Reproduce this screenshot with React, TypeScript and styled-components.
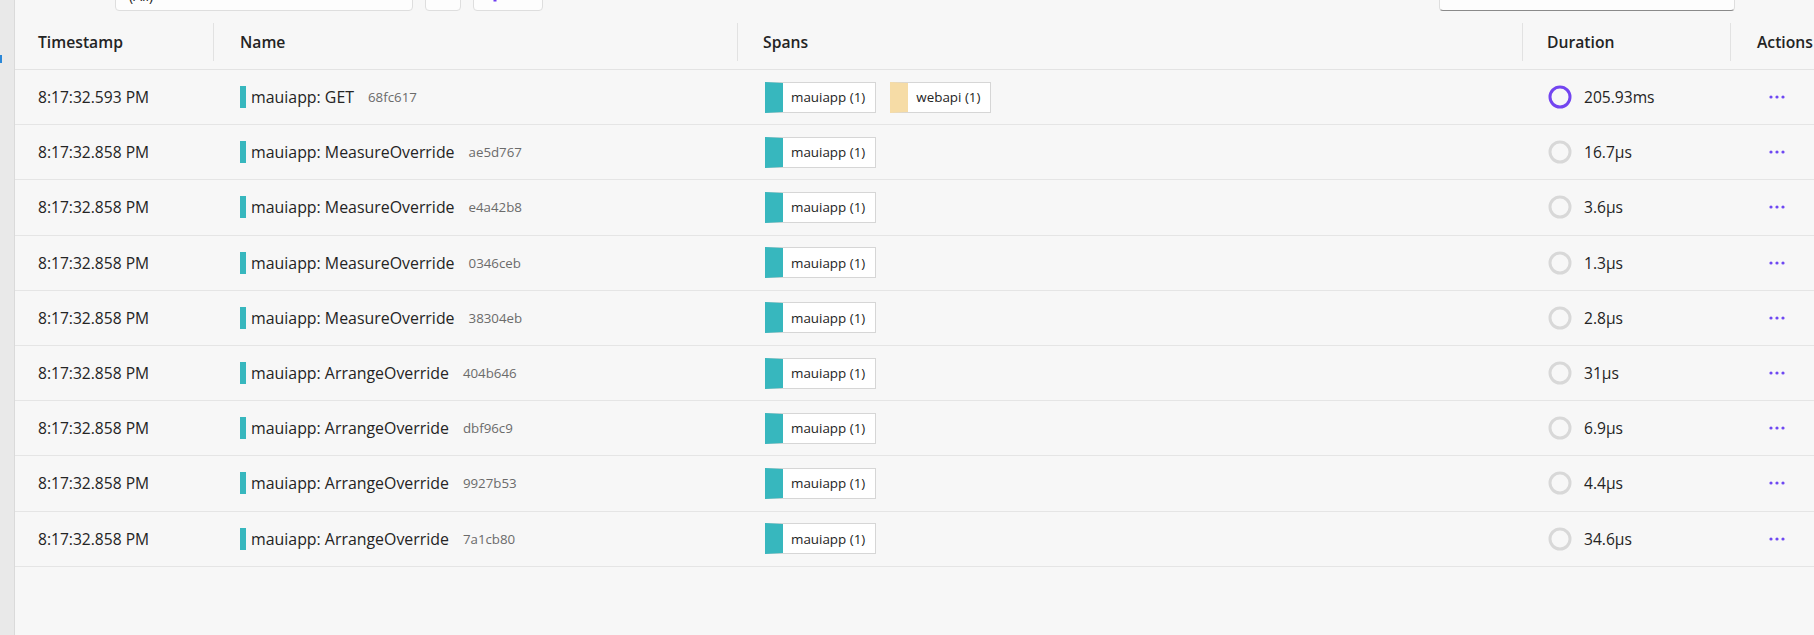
import styled, { createGlobalStyle } from "styled-components";

const GlobalStyle = createGlobalStyle`
    html, body {
        margin: 0;
        padding: 0;
        background: #f7f7f7;
        font-family: "Open Sans", "Noto Sans", sans-serif;
        color: #242424;
    }
`;

interface Span {
    label: string;
    color: string;
}

interface Trace {
    time: string;
    name: string;
    id: string;
    spans: Span[];
    duration: string;
    active?: boolean;
}

const TEAL = "#37b7be";
const AMBER = "#f6dca6";

const mauiapp: Span = { label: "mauiapp (1)", color: TEAL };

const traces: Trace[] = [
    { time: "8:17:32.593 PM", name: "mauiapp: GET", id: "68fc617", spans: [mauiapp, { label: "webapi (1)", color: AMBER }], duration: "205.93ms", active: true },
    { time: "8:17:32.858 PM", name: "mauiapp: MeasureOverride", id: "ae5d767", spans: [mauiapp], duration: "16.7µs" },
    { time: "8:17:32.858 PM", name: "mauiapp: MeasureOverride", id: "e4a42b8", spans: [mauiapp], duration: "3.6µs" },
    { time: "8:17:32.858 PM", name: "mauiapp: MeasureOverride", id: "0346ceb", spans: [mauiapp], duration: "1.3µs" },
    { time: "8:17:32.858 PM", name: "mauiapp: MeasureOverride", id: "38304eb", spans: [mauiapp], duration: "2.8µs" },
    { time: "8:17:32.858 PM", name: "mauiapp: ArrangeOverride", id: "404b646", spans: [mauiapp], duration: "31µs" },
    { time: "8:17:32.858 PM", name: "mauiapp: ArrangeOverride", id: "dbf96c9", spans: [mauiapp], duration: "6.9µs" },
    { time: "8:17:32.858 PM", name: "mauiapp: ArrangeOverride", id: "9927b53", spans: [mauiapp], duration: "4.4µs" },
    { time: "8:17:32.858 PM", name: "mauiapp: ArrangeOverride", id: "7a1cb80", spans: [mauiapp], duration: "34.6µs" },
];

const COLUMNS = "198px 524px 785px 208px 1fr";

const Page = styled("div")`
    display: flex;
    min-height: 635px;
`;

const Sidebar = styled("nav")`
    width: 14px;
    flex-shrink: 0;
    background: #e9e9e9;
    border-right: 1px solid #dadada;
    padding-top: 55px;
    .marker{
        width: 2px;
        height: 8px;
        background: #2b88d8;
    }
`;

const Main = styled("main")`
    flex: 1;
    display: flex;
    flex-direction: column;
    min-width: 0;
`;

const Toolbar = styled("div")`
    height: 12px;
    display: flex;
    align-items: flex-end;
    overflow: hidden;
    padding-left: 100px;
    padding-bottom: 1px;
    box-sizing: border-box;
`;

const ToolBox = styled("div")<{ $w: number; $gap?: number; $underline?: boolean }>`
    flex-shrink: 0;
    width: ${p => p.$w}px;
    height: 32px;
    margin-left: ${p => p.$gap ?? 0}px;
    box-sizing: border-box;
    background: #fdfdfd;
    border: 1px solid #dedede;
    border-bottom-color: ${p => p.$underline ? "#8a8a8a" : "#dedede"};
    border-radius: 4px;
    display: flex;
    align-items: center;
    padding-left: 13px;
    font-size: 14px;
    color: #242424;
`;

const Spacer = styled("div")`
    flex: 1;
`;

const HeaderRow = styled("div")`
    display: grid;
    grid-template-columns: ${COLUMNS};
    padding: 11px 0 8px;
    border-bottom: 1px solid #e3e3e3;
`;

const HeaderCell = styled("div")<{ $pl: number; $first?: boolean }>`
    height: 38px;
    display: flex;
    align-items: center;
    padding-left: ${p => p.$pl}px;
    border-left: ${p => p.$first ? "none" : "1px solid #e2e2e2"};
    font-size: 15.7px;
    font-weight: 600;
    white-space: nowrap;
    overflow: hidden;
`;

const Row = styled("div")`
    display: grid;
    grid-template-columns: ${COLUMNS};
    height: 55.2px;
    box-sizing: border-box;
    border-bottom: 1px solid #e5e5e5;
`;

const Cell = styled("div")<{ $pl: number }>`
    display: flex;
    align-items: center;
    padding-left: ${p => p.$pl}px;
    white-space: nowrap;
    overflow: hidden;
    font-size: 15.9px;
`;

const Time = styled("span")`
    font-size: 15.6px;
`;

const NameBar = styled("span")`
    width: 6px;
    height: 22px;
    background: ${TEAL};
    margin-right: 5px;
    flex-shrink: 0;
`;

const TraceId = styled("span")`
    margin-left: 14px;
    font-size: 13.3px;
    color: #6b6b6b;
`;

const Badge = styled("span")<{ $color: string }>`
    display: inline-flex;
    align-items: center;
    height: 31px;
    box-sizing: border-box;
    margin-right: 14px;
    background: #fff;
    border: 1px solid #d6d6d6;
    border-left: 18px solid ${p => p.$color};
    padding: 0 10px 0 8px;
    font-size: 13.4px;
    color: #242424;
`;

const DurationText = styled("span")`
    margin-left: 12px;
    font-size: 15.6px;
`;

const Ring = ({ active }: { active?: boolean }) => (
    <svg width="24" height="24" viewBox="0 0 24 24">
        <circle cx="12" cy="12" r="10" fill="none" stroke={active ? "#7345f0" : "#d8d8d8"} strokeWidth="3" />
    </svg>
);

const Dots = () => (
    <svg width="16" height="4" viewBox="0 0 16 4">
        <circle cx="2" cy="2" r="1.6" fill="#6e48f2" />
        <circle cx="8" cy="2" r="1.6" fill="#6e48f2" />
        <circle cx="14" cy="2" r="1.6" fill="#6e48f2" />
    </svg>
);

const FunnelIcon = () => (
    <svg width="16" height="14" viewBox="0 0 16 14">
        <path d="M1 0h14l-5.5 7v6.5h-3V7z" fill="#6d3df0" />
    </svg>
);

const headers = [
    { title: "Timestamp", pl: 23 },
    { title: "Name", pl: 26 },
    { title: "Spans", pl: 25 },
    { title: "Duration", pl: 24 },
    { title: "Actions", pl: 26 },
];

export default function App() {
    return (
        <Page>
            <GlobalStyle />
            <Sidebar>
                <div className="marker" />
            </Sidebar>
            <Main>
                <Toolbar>
                    <ToolBox $w={298}>(All)</ToolBox>
                    <ToolBox $w={36} $gap={12} />
                    <ToolBox $w={70} $gap={12}>
                        <FunnelIcon />
                    </ToolBox>
                    <Spacer />
                    <ToolBox $w={296} $underline />
                    <div style={{ width: 79, flexShrink: 0 }} />
                </Toolbar>
                <HeaderRow>
                    {headers.map((h, k) => (
                        <HeaderCell key={k} $pl={h.pl} $first={k === 0}>{h.title}</HeaderCell>
                    ))}
                </HeaderRow>
                {traces.map((t, k) => (
                    <Row key={k}>
                        <Cell $pl={23}>
                            <Time>{t.time}</Time>
                        </Cell>
                        <Cell $pl={27}>
                            <NameBar />
                            {t.name}
                            <TraceId>{t.id}</TraceId>
                        </Cell>
                        <Cell $pl={28}>
                            {t.spans.map((s, i) => (
                                <Badge key={i} $color={s.color}>{s.label}</Badge>
                            ))}
                        </Cell>
                        <Cell $pl={26}>
                            <Ring active={t.active} />
                            <DurationText>{t.duration}</DurationText>
                        </Cell>
                        <Cell $pl={39}>
                            <Dots />
                        </Cell>
                    </Row>
                ))}
            </Main>
        </Page>
    );
}
